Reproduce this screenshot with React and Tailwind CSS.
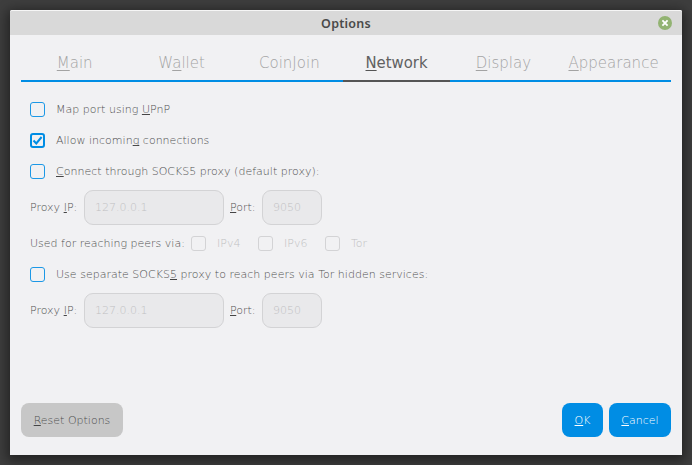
import React from "react";

// Label with one underlined access key, marked by "&" before the letter.
function Label({ text, line = "decoration-[#454545] underline-offset-1" }) {
  const i = text.indexOf("&");
  if (i < 0) return <>{text}</>;
  return (
    <>
      {text.slice(0, i)}
      <span className={`underline decoration-1 [text-decoration-skip-ink:none] ${line}`}>{text[i + 1]}</span>
      {text.slice(i + 2)}
    </>
  );
}

const tabs = [
  { text: "&Main", width: "w-[107px]" },
  { text: "W&allet", width: "w-[107px]" },
  { text: "CoinJoin", width: "w-[108px]" },
  { text: "&Network", width: "w-[107px]", active: true },
  { text: "&Display", width: "w-[107px]" },
  { text: "&Appearance", width: "w-[114px]" },
];

function Tab({ text, width, active }) {
  return (
    <button
      className={`flex h-[38px] shrink-0 justify-center border-b-2 pt-[7px] text-[16.5px] leading-[24px] whitespace-nowrap ${width} ${
        active ? "border-[#555555] font-['DejaVu_Sans_Condensed','DejaVu_Sans',sans-serif] font-normal text-[#606060]" : "border-[#008de4] text-[#a3a3a3]"
      }`}
    >
      <span className={active ? "" : "scale-x-[0.91]"}>
        <Label text={text} line={active ? "decoration-[#555555] underline-offset-2" : "decoration-[#a3a3a3] underline-offset-2"} />
      </span>
    </button>
  );
}

function Box({ checked, disabled }) {
  return (
    <span
      className={`flex size-[15px] shrink-0 items-center justify-center rounded-[3px] ${
        disabled ? "border border-[#d3d3d5]" : checked ? "border-2 border-[#008de4]" : "border-[1.5px] border-[#1c98e6]"
      }`}
    >
      {checked && (
        <svg viewBox="0 0 11 11" className="size-[11px] shrink-0" fill="none" stroke="#008de4" strokeWidth="2">
          <path d="M1.5 5.5 4.3 8.5 9.6 2" />
        </svg>
      )}
    </span>
  );
}

function Check({ text, checked }) {
  return (
    <label className="flex h-[15px] items-center gap-[11px]">
      <Box checked={checked} />
      <span className="tracking-[0.02px]"><Label text={text} /></span>
    </label>
  );
}

function Field({ value, width }) {
  return (
    <div className={`flex h-[35px] items-center rounded-[9px] border border-[#d3d3d5] bg-[#e9e9eb] pl-[10px] text-[#c0c0c2] ${width}`}>{value}</div>
  );
}

function Proxy() {
  return (
    <div className="flex items-center">
      <span className="w-[54px]"><Label text="Proxy &IP:" /></span>
      <Field value="127.0.0.1" width="w-[140px]" />
      <span className="ml-[6px] w-[32px]"><Label text="&Port:" /></span>
      <Field value="9050" width="w-[60px]" />
    </div>
  );
}

export default function App() {
  return (
    <div className="h-[465px] w-[692px] overflow-hidden bg-[#3e3e3e] p-[10px] font-['DejaVu_Sans',sans-serif] text-[11px] leading-[15px] font-extralight text-[#505050]">
      <main className="flex h-[445px] w-[672px] flex-col rounded-t-[2px] bg-[#f1f1f3] shadow-[0_3px_12px_3px_rgba(0,0,0,0.45)]">
        <header className="flex h-[25px] shrink-0 items-center rounded-t-[2px] border-t border-[#f6f6f6] bg-[#d9d9d9] pr-[10px] pl-[24px]">
          <h1 className="flex-1 pt-px text-center font-['Noto_Sans',sans-serif] text-[12.5px] font-semibold tracking-[0.25px] text-[#4a4a4a]">Options</h1>
          <svg viewBox="0 0 14 14" className="size-[14px]">
            <circle cx="7" cy="7" r="7" fill="#92b372" />
            <path d="m4.4 4.4 5.2 5.2m0-5.2-5.2 5.2" stroke="#fff" strokeWidth="1.8" />
          </svg>
        </header>
        <nav className="flex px-[11px] pt-[9px]">
          {tabs.map((t) => <Tab key={t.text} {...t} />)}
        </nav>
        <section className="flex flex-col pt-[20px] pl-[20px]">
          <div className="flex flex-col gap-4">
            <Check text="Map port using &UPnP" />
            <Check text="Allow incomin&g connections" checked />
            <Check text="&Connect through SOCKS5 proxy (default proxy):" />
          </div>
          <div className="mt-[11px]"><Proxy /></div>
          <div className="mt-[11px] flex h-[15px] items-center">
            <span className="w-[161px]">Used for reaching peers via:</span>
            {["IPv4", "IPv6", "Tor"].map((n) => (
              <label key={n} className="flex w-[67px] items-center gap-[11px] text-[#c0c0c2]">
                <Box disabled />
                {n}
              </label>
            ))}
          </div>
          <div className="mt-4"><Check text="Use separate SOCKS&5 proxy to reach peers via Tor hidden services:" /></div>
          <div className="mt-[11px]"><Proxy /></div>
        </section>
        <footer className="mt-auto mb-[18px] flex gap-[6px] px-[11px]">
          <button className="mr-auto h-[34px] w-[102px] rounded-[8px] bg-[#c7c7c7]"><Label text="&Reset Options" /></button>
          <button className="h-[34px] w-[41px] rounded-[8px] bg-[#008de4] text-white"><Label text="&OK" line="decoration-white underline-offset-1" /></button>
          <button className="h-[34px] w-[62px] rounded-[8px] bg-[#008de4] text-white"><Label text="&Cancel" line="decoration-white underline-offset-1" /></button>
        </footer>
      </main>
    </div>
  );
}
